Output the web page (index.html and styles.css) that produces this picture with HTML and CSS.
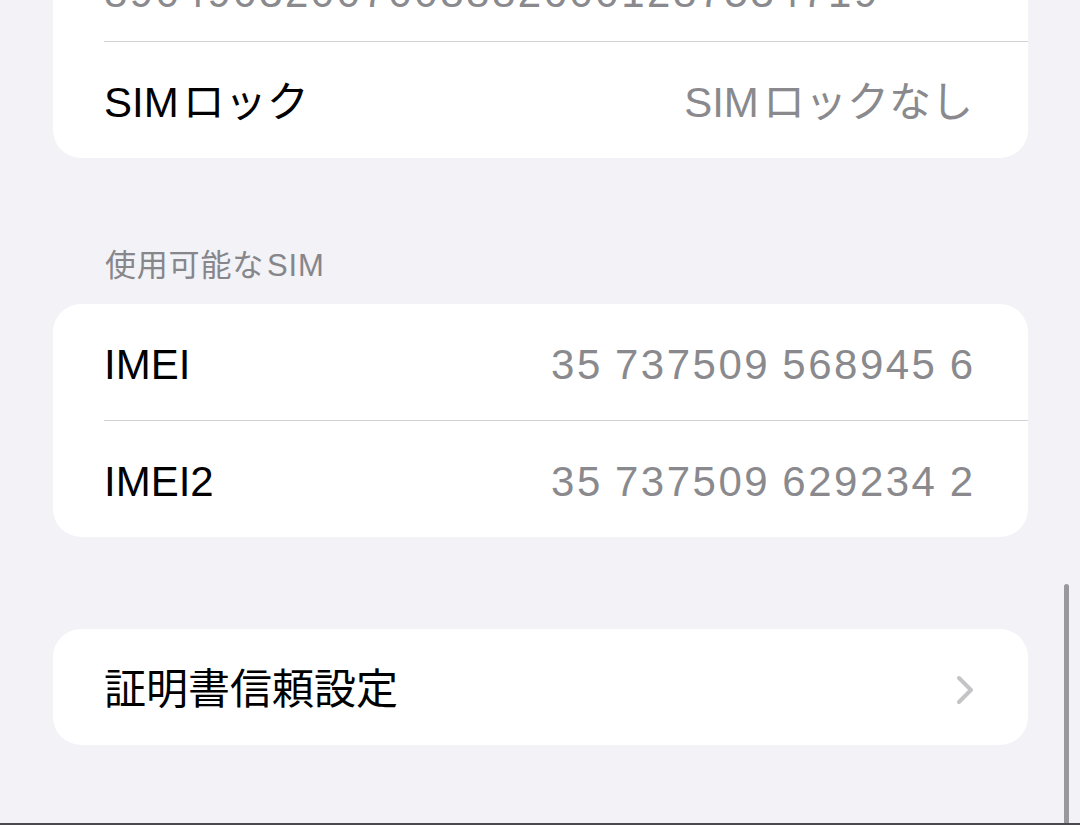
FILE: index.html
```html
<!DOCTYPE html>
<html lang="ja">
<head>
    <meta charset="UTF-8">
    <meta name="viewport" content="width=device-width, initial-scale=1.0">
    <title>情報</title>
    <link rel="stylesheet" href="styles.css">
</head>
<body>
    <div class="screen">
        <div class="group first">
            <div class="row stacked">
                <span class="label">EID</span>
                <span class="value num">890490320070088826001287534719</span>
            </div>
            <div class="row">
                <span class="label">SIM<span class="gap"></span>ロック</span>
                <span class="value">SIM<span class="gap"></span>ロックなし</span>
            </div>
        </div>

        <div class="section_title">使用可能な<span class="gap"></span>SIM</div>
        <div class="group">
            <div class="row">
                <span class="label">IMEI</span>
                <span class="value num">35 737509 568945 6</span>
            </div>
            <div class="row">
                <span class="label">IMEI2</span>
                <span class="value num">35 737509 629234 2</span>
            </div>
        </div>

        <div class="group spaced">
            <div class="row">
                <span class="label">証明書信頼設定</span>
                <svg class="chevron" width="18" height="30" viewBox="0 0 18 30">
                    <path d="M3 3 L15 15 L3 27" fill="none" stroke="#c4c4c7" stroke-width="4" stroke-linecap="round" stroke-linejoin="round"/>
                </svg>
            </div>
        </div>
    </div>
    <div class="scroll_indicator"></div>
    <div class="bottom_edge"></div>
</body>
</html>
```

FILE: styles.css
```css
body {
    margin: 0;
    height: 825px;
    overflow: hidden;
    background-color: #f2f2f7;
    font-family: "Liberation Sans", "Noto Sans CJK JP", sans-serif;
    color: #000;
}

.screen {
    padding: 0 52px 0 53px;
}

.group {
    background: #ffffff;
    border-radius: 28px;
    padding-left: 51px;
}

.group.first {
    margin-top: -108px;
    border-radius: 0 0 28px 28px;
}

.group.spaced {
    margin-top: 92px;
}

.row {
    display: flex;
    justify-content: space-between;
    align-items: center;
    box-sizing: border-box;
    height: 116px;
    padding: 5px 55px 0 0;
    font-size: 42px;
    line-height: 50px;
}

.row + .row {
    height: 117px;
    border-top: 1px solid #d1d1d6;
}

.row.stacked {
    flex-direction: column;
    align-items: flex-start;
    justify-content: flex-start;
    height: 149px;
    padding: 24px 55px 23px 0;
}

.row.stacked .value {
    margin-top: 2px;
}

.label {
    white-space: nowrap;
}

.value {
    color: #8a8a8e;
    white-space: nowrap;
}

/* small space between latin and kana, like the system font does */
.gap {
    display: inline-block;
    width: 0.1em;
}

.num {
    letter-spacing: 2.5px;
    word-spacing: -2px;
    margin-right: -2.5px;
}

.section_title {
    margin: 88px 0 18px 52px;
    font-size: 31px;
    line-height: 40px;
    color: #86868b;
    letter-spacing: 0.8px;
}

.chevron {
    display: block;
    margin-right: -1px;
}

.scroll_indicator {
    position: absolute;
    top: 584px;
    right: 11px;
    width: 5px;
    height: 250px;
    border-radius: 3px;
    background-color: #98989d;
}

.bottom_edge {
    position: absolute;
    left: 0;
    right: 0;
    bottom: 0;
    height: 2px;
    background-color: #4a4a4e;
}
```
